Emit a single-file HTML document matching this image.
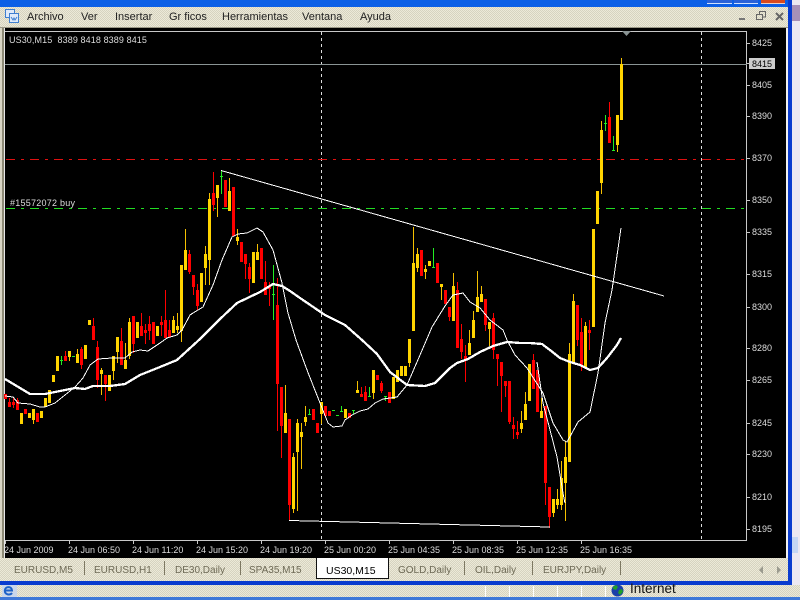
<!DOCTYPE html>
<html><head><meta charset="utf-8"><title>US30,M15</title>
<style>
html,body{margin:0;padding:0;width:800px;height:600px;overflow:hidden;background:#e6e3d2}
.a{position:absolute}
.d{background-color:#ece9d8;background-image:conic-gradient(#d6d3c0 25%,transparent 0 50%,#d6d3c0 0 75%,transparent 0);background-size:2px 2px}
.t{position:absolute;font:11px/14px "Liberation Sans",sans-serif;color:#222;white-space:pre}
.tab{position:absolute;top:564px;font:10px/14px "Liberation Sans",sans-serif;color:#6e6a56;white-space:pre}
.s{position:absolute;top:561px;width:1px;height:14px;background:#7d7862}
.b{position:absolute;top:586px;width:1px;height:11px;background:#fff}
svg{position:absolute;left:0;top:0}
svg text{font-family:"Liberation Sans",sans-serif;font-size:9px;fill:#ddd;white-space:pre}
</style></head><body>
<div class="a" style="left:0;top:0;width:800px;height:7px;background:#0b5fe6"></div>
<div class="a" style="left:707px;top:0;width:25px;height:3px;background:#2a62d8;border-bottom:1px solid #cfe0ff"></div>
<div class="a" style="left:734px;top:0;width:24px;height:3px;background:#2a62d8;border-bottom:1px solid #cfe0ff"></div>
<div class="a" style="left:761px;top:0;width:24px;height:3px;background:#d9491e;border-bottom:1px solid #f0cfc0"></div>
<div class="a d" style="left:0;top:7px;width:790px;height:20px"></div>
<div class="a" style="left:0;top:27px;width:788px;height:1px;background:#9a9786"></div>
<div class="a" style="left:792px;top:0;width:8px;height:585px;background:#ece8f2"></div>
<div class="a" style="left:792px;top:5px;width:8px;height:16px;background:#a890b8"></div>
<div class="a" style="left:792px;top:537px;width:6px;height:16px;background:#c5d6f4"></div>
<div class="a" style="left:788px;top:0;width:4px;height:585px;background:#0a3ccf"></div>
<div class="a" style="left:0;top:28px;width:5px;height:530px;background:#d8d5c4"></div>
<div class="a" style="left:2px;top:28px;width:2px;height:530px;background:#8d8a76"></div>
<div class="a" style="left:4px;top:28px;width:1px;height:530px;background:#e8e8e8"></div>
<div class="a" style="left:5px;top:28px;width:781px;height:530px;background:#000"></div>
<div class="a" style="left:786px;top:28px;width:2px;height:533px;background:#f2f2f2"></div>
<div class="a d" style="left:0;top:558px;width:788px;height:23px"></div>
<div class="a" style="left:0;top:581px;width:792px;height:4px;background:#0a3ccf"></div>
<div class="a d" style="left:0;top:585px;width:800px;height:12px"></div>
<div class="a" style="left:0;top:597px;width:800px;height:3px;background:#3f78d8"></div>

<div class="t" style="left:27px;top:10px">Archivo</div>
<div class="t" style="left:81px;top:10px">Ver</div>
<div class="t" style="left:115px;top:10px">Insertar</div>
<div class="t" style="left:169px;top:10px">Gr ficos</div>
<div class="t" style="left:222px;top:10px">Herramientas</div>
<div class="t" style="left:302px;top:10px">Ventana</div>
<div class="t" style="left:360px;top:10px">Ayuda</div>

<div class="tab" style="left:14px">EURUSD,M5</div><div class="s" style="left:84px"></div>
<div class="tab" style="left:94px">EURUSD,H1</div><div class="s" style="left:164px"></div>
<div class="tab" style="left:175px">DE30,Daily</div><div class="s" style="left:240px"></div>
<div class="tab" style="left:249px">SPA35,M15</div>
<div class="a" style="left:316px;top:558px;width:71px;height:20px;background:#fff;border:solid #111;border-width:0 1px 1px 1px"></div>
<div class="tab" style="left:326px;color:#000;font-size:10.5px">US30,M15</div>
<div class="tab" style="left:398px">GOLD,Daily</div><div class="s" style="left:464px"></div>
<div class="tab" style="left:475px">OIL,Daily</div><div class="s" style="left:532px"></div>
<div class="tab" style="left:543px">EURJPY,Daily</div><div class="s" style="left:620px"></div>

<div class="b" style="left:485px"></div><div class="b" style="left:509px"></div><div class="b" style="left:533px"></div><div class="b" style="left:557px"></div><div class="b" style="left:581px"></div><div class="b" style="left:605px"></div>
<div class="t" style="left:630px;top:582px;font-size:13.5px;line-height:14px;color:#111">Internet</div>

<svg width="800" height="600" viewBox="0 0 800 600">
<!-- icons -->
<g fill="#dfeafa" stroke="#3f7fd0"><rect x="5.5" y="9.5" width="9" height="8"/><rect x="9.5" y="13.5" width="9" height="9"/></g>
<path d="M11 17l2 3 1-2 1 2 2-3" fill="none" stroke="#3f7fd0"/>
<rect x="739" y="18" width="6" height="2" fill="#777"/>
<g fill="none" stroke="#666" stroke-width="1" shape-rendering="crispEdges"><rect x="756.5" y="14.5" width="6" height="5"/><path d="M759.5 14.5V11.5H765.5V17H762.5"/></g>
<path d="M776 13L783 20M783 13L776 20" stroke="#666" stroke-width="2" fill="none"/>
<path d="M763 566V574L759 570Z M777 566V574L781 570Z" fill="#9a9a8e"/>
<rect x="2" y="585" width="15" height="12" fill="#c9d6ea"/>
<path d="M5 590.5H12C12 586 5 586 4.800 590.500C4.800 595 10 595.500 12 593" fill="none" stroke="#1d62c8" stroke-width="2"/>
<circle cx="617.5" cy="590.5" r="6" fill="#1a3fa8"/><path d="M613 587l3-2 2 2-2 3-3-1zM619 590l3-1 1 3-3 3-2-2z" fill="#1fa02a"/>

<g shape-rendering="crispEdges" fill="none">
<!-- frame -->
<path d="M5 31.5H747M746.5 31V541M5 540.5H747" stroke="#c8c8c8"/>
<path d="M747 43.5h3M747 63.5h3M747 85.5h3M747 116.5h3M747 158.5h3M747 200.5h3M747 232.5h3M747 274.5h3M747 307.5h3M747 348.5h3M747 380.5h3M747 423.5h3M747 454.5h3M747 497.5h3M747 529.5h3" stroke="#c8c8c8"/>
<path d="M5.5 540V544M69.5 540V544M133.5 540V544M197.5 540V544M261.5 540V544M325.5 540V544M389.5 540V544M453.5 540V544M517.5 540V544M581.5 540V544" stroke="#c8c8c8"/>
<!-- grid/levels -->
<path d="M321.5 32V540M701.5 32V540" stroke="#ddd" stroke-dasharray="3 3"/>
<path d="M5 64.5H747" stroke="#8a9494"/>
<path d="M6 159.5H747" stroke="#e01010" stroke-dasharray="9 6 3 6"/>
<path d="M6 208.5H747" stroke="#22dd22" stroke-dasharray="9 6 3 6"/>
<!-- red wicks -->
<path stroke="#f00" d="M9.5 398V407M13.5 398V408M17.5 398V410M65.5 351V361M81.5 347V369M93.5 318V340M97.5 341V388M105.5 375V401M121.5 328V365M133.5 316V353M141.5 313V336M145.5 324V344M149.5 316V340M161.5 316V336M165.5 290V338M169.5 320V337M189.5 250V274M193.5 275V295M197.5 284V310M213.5 172V211M245.5 254V279M249.5 263V293M265.5 261V295M269.5 282V306M277.5 278V431M281.5 387V458M289.5 419V520M361.5 387V397M365.5 386V401M381.5 381V393M449.5 307V321M457.5 282V348M461.5 324V359M465.5 345V382M485.5 299V331M493.5 313V359M497.5 354V386M501.5 362V412M505.5 381V397M509.5 381V424M513.5 417V439M517.5 421V439M533.5 354V389M545.5 406V505M549.5 487V528M577.5 305V346M581.5 318V371M589.5 320V350M609.5 102V143"/>
<!-- red bodies -->
<path stroke="#f00" stroke-width="3" d="M5.5 394V399M9.5 402V407M13.5 402V405M17.5 400V410M25.5 409V414M37.5 413V422M65.5 356V361M81.5 349V365M93.5 326V340M97.5 347V380M105.5 375V384M121.5 341V365M133.5 316V344M141.5 326V336M145.5 330V333M149.5 324V331M153.5 322V344M161.5 322V325M165.5 320V338M169.5 330V337M189.5 254V272M193.5 275V287M197.5 290V306M213.5 193V205M225.5 180V207M233.5 187V236M241.5 242V262M245.5 254V264M249.5 267V279M261.5 248V279M265.5 282V295M269.5 286V289M277.5 305V384M281.5 387V426M289.5 419V505M313.5 409V420M317.5 423V433M325.5 406V416M329.5 411V416M349.5 413V418M361.5 394V397M365.5 392V401M377.5 375V380M381.5 383V391M389.5 392V403M421.5 250V276M437.5 263V283M445.5 290V304M449.5 307V317M457.5 290V348M461.5 339V352M465.5 356V359M485.5 299V325M493.5 318V350M497.5 354V359M501.5 362V376M505.5 381V386M509.5 381V422M513.5 425V429M517.5 432V435M533.5 360V389M537.5 370V412M545.5 406V483M549.5 487V517M577.5 305V340M581.5 332V365M589.5 330V333M609.5 117V143"/>
<!-- yellow wicks -->
<path stroke="#f5c000" d="M33.5 409V424M69.5 351V361M77.5 349V363M101.5 368V395M113.5 356V380M117.5 337V363M125.5 343V369M129.5 318V359M173.5 316V333M177.5 313V333M181.5 265V342M185.5 229V270M205.5 246V285M209.5 193V285M217.5 185V217M229.5 178V211M237.5 229V245M257.5 244V260M285.5 385V433M293.5 453V513M297.5 419V511M301.5 423V469M305.5 406V426M321.5 402V424M357.5 381V393M373.5 370V399M409.5 339V367M413.5 227V331M417.5 248V272M425.5 265V279M441.5 284V300M453.5 273V321M469.5 330V355M473.5 311V338M477.5 271V312M481.5 286V302M489.5 322V346M521.5 411V433M525.5 392V420M541.5 398V418M553.5 499V517M557.5 489V509M561.5 461V510M565.5 441V521M569.5 343V462M573.5 294V362M585.5 322V368M601.5 121V194M617.5 115V152M621.5 58V120"/>
<!-- yellow bodies -->
<path stroke="#ffd400" stroke-width="3" d="M21.5 413V424M29.5 413V418M33.5 409V420M41.5 411V418M45.5 398V407M49.5 390V403M53.5 375V382M57.5 356V371M69.5 351V357M77.5 354V363M85.5 345V359M89.5 320V325M101.5 370V374M109.5 375V391M113.5 356V371M117.5 337V352M125.5 360V369M129.5 322V356M137.5 322V338M157.5 326V336M173.5 320V333M177.5 326V330M181.5 265V331M185.5 250V270M201.5 273V302M205.5 254V268M209.5 199V260M217.5 185V198M229.5 191V211M237.5 237V241M253.5 252V283M257.5 252V260M285.5 413V433M293.5 457V509M297.5 423V452M301.5 432V437M305.5 417V422M321.5 402V414M345.5 409V418M357.5 390V393M373.5 370V393M393.5 377V399M397.5 370V382M401.5 366V376M405.5 366V376M409.5 339V363M413.5 263V331M417.5 254V268M425.5 269V272M429.5 261V266M441.5 284V287M453.5 286V321M469.5 343V355M473.5 320V338M477.5 297V312M481.5 294V302M489.5 322V329M521.5 423V429M525.5 404V420M529.5 364V401M541.5 411V418M553.5 499V513M557.5 499V505M561.5 478V505M565.5 457V483M569.5 354V462M573.5 301V362M585.5 326V368M593.5 229V327M597.5 191V224M601.5 130V183M617.5 115V145M621.5 64V120"/>
<!-- green -->
<path stroke="#22ee22" d="M61.5 356V365M60 360.5h3M72 356.5h3M221.5 170V194M220 176.5h3M273.5 265V320M272 294.5h3M309.5 409V414M308 414.5h3M332 410.5h3M336 415.5h3M341.5 406V412M340 411.5h3M353.5 410V414M352 410.5h3M369.5 387V397M368 396.5h3M385.5 396V401M384 396.5h3M433.5 248V267M432 267.5h3M605.5 115V131M604 123.5h3M613.5 136V151M612 150.5h3"/>
</g>
<g fill="none" stroke="#fff" stroke-linejoin="round" shape-rendering="crispEdges">
<!-- trend lines -->
<path d="M221 170.500L664 296"/>
<path d="M289 520.500L550 527"/>
<path d="M537 362L543 403L550 430L557 457L563 493L565 503"/>
<!-- thin MA -->
<path d="M5 396L13 397L18 403L30 404L40 407L45 407L55 403L65 395L75 387L83 378L90 365L98 359L112 358L125 358L132 352L140 350L148 351L160 343L167 338L177 335L182 330L190 315L193 313L203 307L213 285L222 260L232 237L238 234L247 233L257 228L263 232L273 250L282 283L288 313L296 340L307 370L320 403L328 423L333 427L342 426L345 420L352 415L360 411L368 409L375 403L383 399L397 397L407 385L417 362L432 327L445 306L453 295L463 293L470 302L480 308L490 320L503 330L507 340L515 355L527 368L543 393L553 423L563 440L567 442L578 422L590 412L598 373L605 323L612 290L621 228"/>
<!-- thick MA -->
<path stroke-width="2.300" d="M5 379L30 394L45 394L60 391L75 388L85 389L93 386L110 386L125 384L140 375L160 367L177 360L200 339L220 319L237 303L260 292L273 284L282 286L290 291L300 298L325 315L345 325L362 340L377 354L390 372L407 385L425 386L435 383L450 368L457 363L468 359L480 352L493 346L507 342L520 343L530 343L542 344L550 350L560 358L570 362L580 365L590 370L598 368L607 358L617 345L621 338"/>
</g>
<path d="M622 31H631L626.500 36Z" fill="#8a9494"/>
<rect x="749" y="58" width="26" height="11" fill="#ccc"/>
<text x="9" y="43" xml:space="preserve" style="letter-spacing:.1px">US30,M15  8389 8418 8389 8415</text>
<text x="10" y="206" style="letter-spacing:.25px">#15572072 buy</text>
<text x="752" y="46">8425</text>
<text x="752" y="67" style="fill:#000">8415</text>
<text x="752" y="88">8405</text>
<text x="752" y="119">8390</text>
<text x="752" y="161">8370</text>
<text x="752" y="203">8350</text>
<text x="752" y="235">8335</text>
<text x="752" y="277">8315</text>
<text x="752" y="310">8300</text>
<text x="752" y="351">8280</text>
<text x="752" y="383">8265</text>
<text x="752" y="426">8245</text>
<text x="752" y="457">8230</text>
<text x="752" y="500">8210</text>
<text x="752" y="532">8195</text>
<text x="4" y="553">24 Jun 2009</text>
<text x="68" y="553">24 Jun 06:50</text>
<text x="132" y="553">24 Jun 11:20</text>
<text x="196" y="553">24 Jun 15:20</text>
<text x="260" y="553">24 Jun 19:20</text>
<text x="324" y="553">25 Jun 00:20</text>
<text x="388" y="553">25 Jun 04:35</text>
<text x="452" y="553">25 Jun 08:35</text>
<text x="516" y="553">25 Jun 12:35</text>
<text x="580" y="553">25 Jun 16:35</text>
</svg>
</body></html>
